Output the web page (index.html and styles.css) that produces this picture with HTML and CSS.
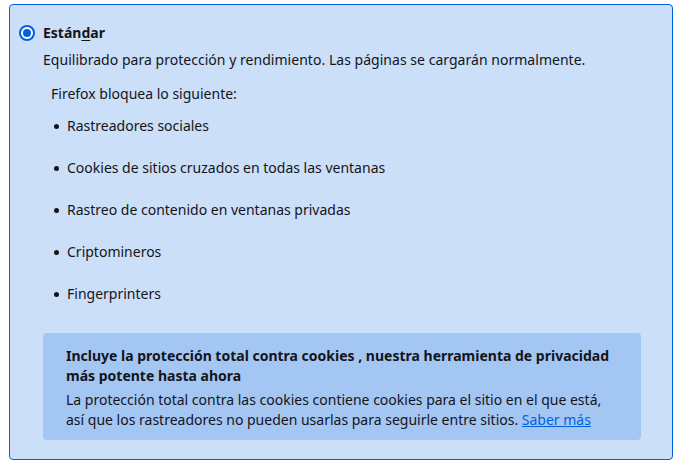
FILE: index.html
```html
<!DOCTYPE html>
<html lang="es">
<head>
<meta charset="utf-8">
<link rel="stylesheet" href="styles.css">
</head>
<body>
<div class="card">
  <label class="title-row">
    <span class="radio"><span class="dot"></span></span>
    <span class="title">Están<u>d</u>ar</span>
  </label>
  <div class="content">
    <p class="desc">Equilibrado para protección y rendimiento. Las páginas se cargarán normalmente.</p>
    <p class="lead">Firefox bloquea lo siguiente:</p>
    <ul class="list">
      <li>Rastreadores sociales</li>
      <li>Cookies de sitios cruzados en todas las ventanas</li>
      <li>Rastreo de contenido en ventanas privadas</li>
      <li>Criptomineros</li>
      <li>Fingerprinters</li>
    </ul>
    <div class="info">
      <p class="info-head">Incluye la protección total contra cookies , nuestra herramienta de privacidad más potente hasta ahora</p>
      <p class="info-body">La protección total contra las cookies contiene cookies para el sitio en el que está, así que los rastreadores no pueden usarlas para seguirle entre sitios. <a href="#" class="link">Saber más</a></p>
    </div>
  </div>
</div>
</body>
</html>
```
FILE: styles.css
```css
html, body {
  margin: 0;
  padding: 0;
  background: #ffffff;
}
body {
  font-family: "Noto Sans", "Open Sans", sans-serif;
  font-size: 14px;
  line-height: 20px;
  color: #15141a;
}
p { margin: 0; }
.card {
  margin: 4px 6px 0 9px;
  height: 456px;
  box-sizing: border-box;
  border: 1px solid #0061e0;
  border-radius: 4px;
  background: #cbdff8;
  padding: 18px 31px 0 9px;
}
.title-row {
  display: flex;
  align-items: center;
  gap: 8px;
  height: 20px;
}
.radio {
  width: 16px;
  height: 16px;
  box-sizing: border-box;
  border: 2px solid #0061e0;
  border-radius: 50%;
  background: #ffffff;
  display: flex;
  align-items: center;
  justify-content: center;
}
.dot {
  width: 8px;
  height: 8px;
  border-radius: 50%;
  background: #0061e0;
}
.title {
  font-weight: 700;
}
.title u {
  text-decoration-thickness: 1px;
  text-underline-offset: 2px;
}
.content {
  padding-left: 24px;
}
.desc {
  margin-top: 7px;
  letter-spacing: 0.03px;
}
.lead {
  margin-top: 14px;
  padding-left: 8px;
}
.list {
  list-style: none;
  margin: 12px 0 0 0;
  padding: 0 0 0 11px;
  display: flex;
  flex-direction: column;
  gap: 22px;
}
.list li {
  display: flex;
  align-items: center;
  gap: 8px;
}
.list li::before {
  content: "";
  width: 5px;
  height: 5px;
  border-radius: 50%;
  background: #15141a;
}
.info {
  margin-top: 29px;
  background: #a4c6f3;
  border-radius: 4px;
  padding: 13px 23px 10px 23px;
}
.info-head {
  font-weight: 700;
}
.info-body {
  margin-top: 4px;
}
.link {
  color: #0061e0;
}
```
